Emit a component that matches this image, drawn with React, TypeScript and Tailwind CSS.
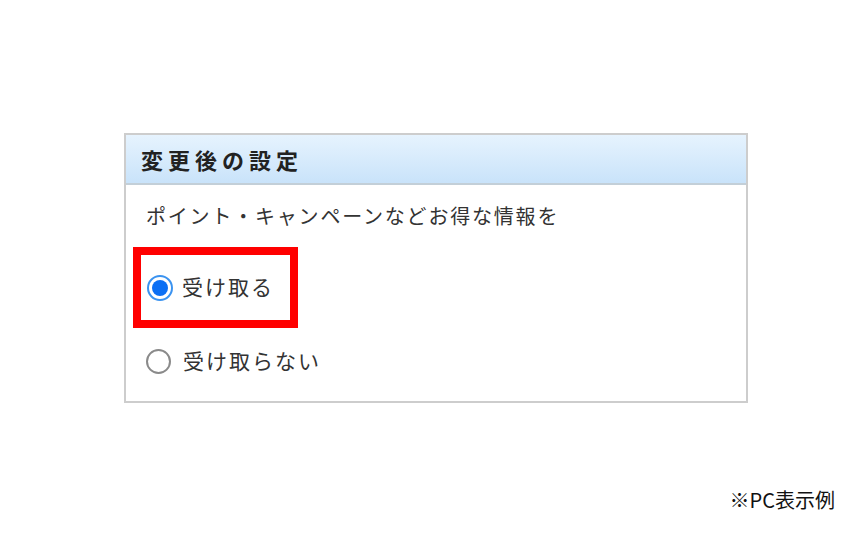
export default function App() {
  const font = { fontFamily: '"Noto Sans CJK JP", "Noto Sans", sans-serif' }

  return (
    <div className="w-[864px] h-[540px] bg-white flex flex-col pt-[133px] text-[#333]" style={font}>
      <div className="ml-[124px] w-[624px] border-2 border-[#cdcdcd] bg-white">
        <div className="h-[50px] flex items-center pl-[15px] border-b-2 border-[#c3cfd8] bg-gradient-to-b from-[#e6f3fe] to-[#c9e3fa]">
          <span className="text-[22px] font-bold tracking-[5px] text-[#222] leading-none">変更後の設定</span>
        </div>

        <div className="pl-[7px] pt-[15px] pb-[24px]">
          <p className="pl-[13px] text-[20px] tracking-[1.8px] leading-[32px]">
            ポイント・キャンペーンなどお得な情報を
          </p>

          <div className="mt-[15px] w-[165px] h-[81px] border-[8px] border-[#ff0000] flex items-center pl-[6px] gap-[9px]">
            <span className="w-[26px] h-[26px] rounded-full border-2 border-[#3b93f0] flex items-center justify-center shrink-0">
              <span className="w-[16px] h-[16px] rounded-full bg-[#0b6ff4]" />
            </span>
            <span className="text-[21px] tracking-[2px] leading-none pb-[2px]">受け取る</span>
          </div>

          <div className="mt-[17px] h-[32px] flex items-center pl-[13px] gap-[12px]">
            <span className="w-[25px] h-[25px] rounded-full border-2 border-[#8a8a8a] bg-white shrink-0" />
            <span className="text-[21px] tracking-[2px] leading-none pb-[2px]">受け取らない</span>
          </div>
        </div>
      </div>

      <div className="mt-[85px] pr-[29px] flex justify-end">
        <span className="text-[20px] font-normal leading-[24px] text-[#111]">※PC表示例</span>
      </div>
    </div>
  )
}
